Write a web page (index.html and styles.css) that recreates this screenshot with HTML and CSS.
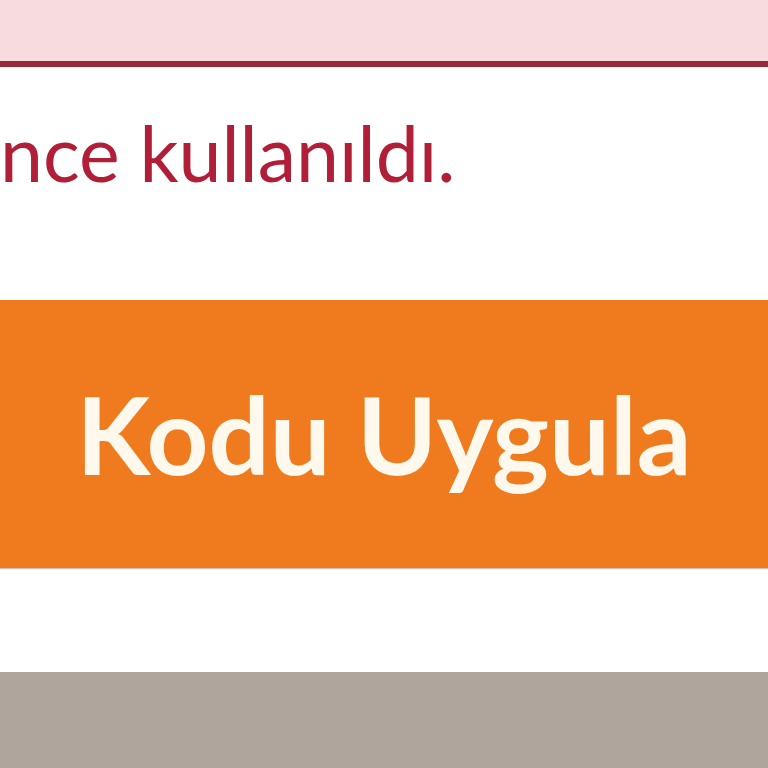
FILE: index.html
```html
<!DOCTYPE html>
<html lang="tr">
<head>
<meta charset="utf-8">
<link rel="stylesheet" href="styles.css">
</head>
<body>
<div class="page">
  <div class="alert-bar"></div>
  <div class="message">nce kullanıldı.</div>
  <button class="apply-btn">Kodu Uygula</button>
  <div class="spacer"></div>
  <div class="footer-bar"></div>
</div>
</body>
</html>
```
FILE: styles.css
```css
html, body {
  margin: 0;
  padding: 0;
  background: #ffffff;
}
.page {
  width: 768px;
  height: 768px;
  overflow: hidden;
  display: flex;
  flex-direction: column;
  font-family: Lato, "Open Sans", sans-serif;
}
.alert-bar {
  height: 61px;
  background: #f7dbde;
  border-bottom: 6px solid #962a3a;
  flex: none;
}
.message {
  height: 233px;
  box-sizing: border-box;
  padding-top: 47px;
  padding-left: 0;
  color: #b01f37;
  font-size: 77px;
  line-height: 1;
  white-space: nowrap;
  flex: none;
}
.apply-btn {
  flex: none;
  height: 268px;
  width: 768px;
  margin: 0;
  border: none;
  background: #f07a1e;
  color: #fff8ec;
  font-family: Lato, "Open Sans", sans-serif;
  font-weight: 700;
  font-size: 108px;
  padding: 0 0 2px 0;
  box-shadow: 0 1px 1px rgba(120, 70, 30, 0.35);
}
.spacer {
  flex: none;
  height: 104px;
}
.footer-bar {
  flex: 1;
  background: #afa59c;
}
```
